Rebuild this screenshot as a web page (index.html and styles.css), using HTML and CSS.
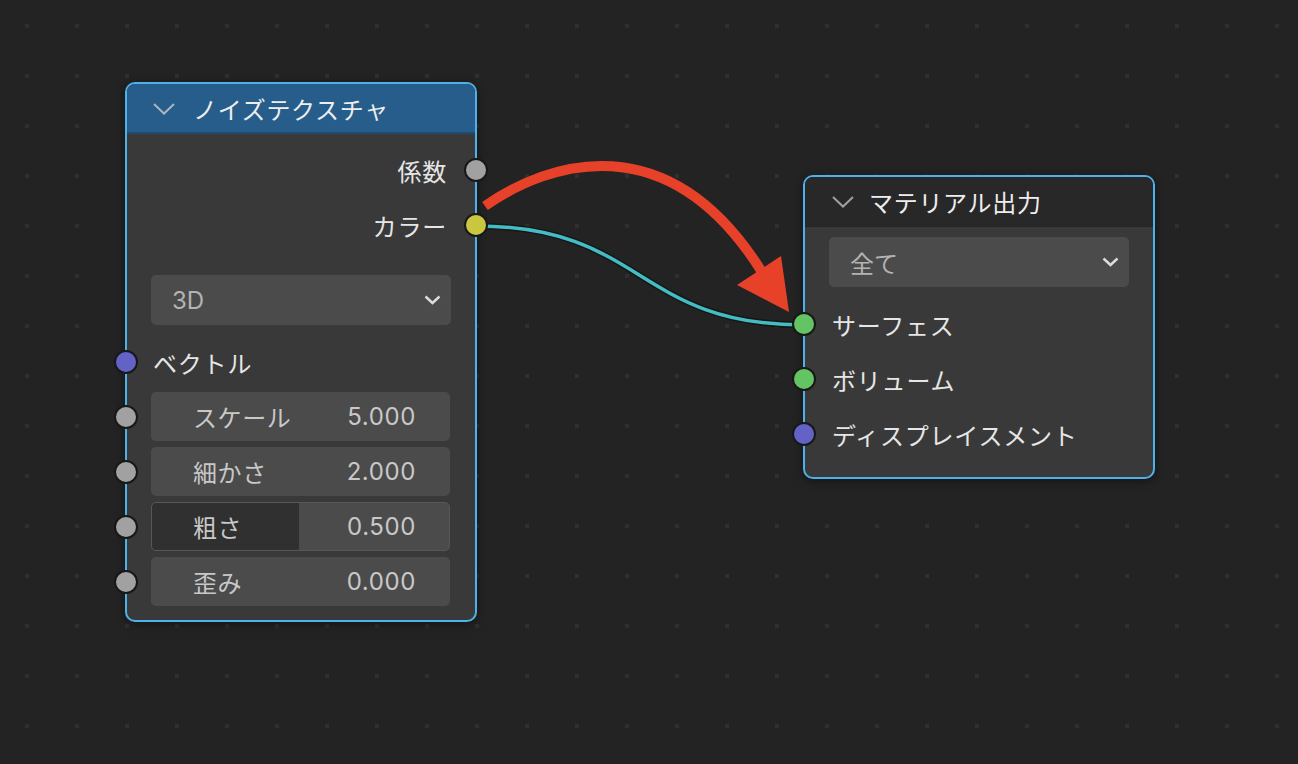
FILE: index.html
```html
<!DOCTYPE html>
<html lang="ja">
<head>
    <meta charset="UTF-8">
    <title>Node Editor</title>
    <link rel="stylesheet" href="styles.css">
</head>
<body>

    <div class="canvas">

        <!-- Links (under the nodes) -->
        <svg class="links" width="1298" height="764" viewBox="0 0 1298 764">
            <path d="M476 226 C 644 226, 636 325, 804 325" fill="none" stroke="#161616" stroke-width="6.5"/>
            <path d="M476 226 C 644 226, 636 325, 804 325" fill="none" stroke="#44bcc4" stroke-width="3.5"/>
        </svg>

        <!-- Noise texture node -->
        <div class="node node-noise">
            <div class="node-header">
                <svg class="chevron" width="22" height="12" viewBox="0 0 22 12"><path d="M1 1 L11 10.5 L21 1" fill="none" stroke="#a9b6c2" stroke-width="2"/></svg>
                <span>ノイズテクスチャ</span>
            </div>
            <div class="node-body">
                <div class="row out first">
                    <span class="label">係数</span>
                    <i class="socket right grey"></i>
                </div>
                <div class="row out second">
                    <span class="label">カラー</span>
                    <i class="socket right yellow"></i>
                </div>

                <div class="dropdown noise-dim">
                    <span>3D</span>
                    <svg width="17" height="10" viewBox="0 0 17 10"><path d="M1.5 1.5 L8.5 8 L15.5 1.5" fill="none" stroke="#dcdcdc" stroke-width="2.4"/></svg>
                </div>

                <div class="row in vector">
                    <i class="socket left purple"></i>
                    <span class="label">ベクトル</span>
                </div>

                <div class="fields">
                    <div class="field-row">
                        <i class="socket left grey"></i>
                        <div class="field"><span>スケール</span><span>5.000</span></div>
                    </div>
                    <div class="field-row">
                        <i class="socket left grey"></i>
                        <div class="field"><span>細かさ</span><span>2.000</span></div>
                    </div>
                    <div class="field-row">
                        <i class="socket left grey"></i>
                        <div class="field factor" style="--fill: 147px"><span>粗さ</span><span>0.500</span></div>
                    </div>
                    <div class="field-row">
                        <i class="socket left grey"></i>
                        <div class="field"><span>歪み</span><span>0.000</span></div>
                    </div>
                </div>
            </div>
        </div>

        <!-- Material output node -->
        <div class="node node-output">
            <div class="node-header">
                <svg class="chevron" width="22" height="12" viewBox="0 0 22 12"><path d="M1 1 L11 10.5 L21 1" fill="none" stroke="#a0a0a0" stroke-width="2"/></svg>
                <span>マテリアル出力</span>
            </div>
            <div class="node-body">
                <div class="dropdown target">
                    <span>全て</span>
                    <svg width="17" height="10" viewBox="0 0 17 10"><path d="M1.5 1.5 L8.5 8 L15.5 1.5" fill="none" stroke="#dcdcdc" stroke-width="2.4"/></svg>
                </div>
                <div class="row in surface">
                    <i class="socket left green"></i>
                    <span class="label">サーフェス</span>
                </div>
                <div class="row in">
                    <i class="socket left green"></i>
                    <span class="label">ボリューム</span>
                </div>
                <div class="row in">
                    <i class="socket left purple"></i>
                    <span class="label">ディスプレイスメント</span>
                </div>
            </div>
        </div>

        <!-- Annotation arrow (over everything) -->
        <svg class="annotation" width="1298" height="764" viewBox="0 0 1298 764">
            <path d="M485 206 C 548 162, 668 122, 762 272" fill="none" stroke="#e8412a" stroke-width="10"/>
            <polygon points="737,285 781,256 789,312" fill="#e8412a"/>
        </svg>
    </div>

</body>
</html>
```

FILE: styles.css
```css
* {
    margin: 0;
    padding: 0;
    box-sizing: border-box;
}

body {
    font-family: "Inter", "Noto Sans CJK JP", sans-serif;
    background-color: #232323;
    color: #e6e6e6;
    overflow: hidden;
}

/* Canvas with dot grid */
.canvas {
    position: relative;
    width: 1298px;
    height: 764px;
    background-color: #232323;
    background-image: conic-gradient(at 4px 4px, transparent 75%, #2f2f2f 0);
    background-size: 50px 50px;
    background-position: 25px 24px;
}

.links,
.annotation {
    position: absolute;
    top: 0;
    left: 0;
}

.annotation {
    z-index: 5;
}

/* Nodes */
.node {
    position: absolute;
    width: 352px;
    background: #393939;
    border: 2px solid #4fb1ea;
    border-radius: 10px;
    box-shadow: 0 2px 10px rgba(0, 0, 0, 0.45);
}

.node-noise {
    left: 125px;
    top: 82px;
    height: 540px;
}

.node-output {
    left: 803px;
    top: 175px;
    height: 304px;
}

.node-header {
    height: 50px;
    display: flex;
    align-items: center;
    padding-left: 26px;
    gap: 18px;
    font-size: 24px;
    color: #eeeeee;
    border-radius: 8px 8px 0 0;
    letter-spacing: 0.7px;
}

.node-noise .node-header {
    background: #275d8b;
    border-bottom: 2px solid #1f4c72;
}

.node-output .node-header {
    background: #282828;
    border-bottom: 1px solid #262626;
    gap: 15px;
    padding-left: 27px;
}

.chevron {
    flex-shrink: 0;
    margin-top: 1px;
}

/* Socket rows */
.row {
    position: relative;
    height: 30px;
    display: flex;
    align-items: center;
    font-size: 24px;
    letter-spacing: 0.8px;
}

.row.out {
    justify-content: flex-end;
    padding-right: 28px;
}

.row.in {
    padding-left: 26px;
    margin-top: 25px;
}

.row.first {
    margin-top: 21px;
}

.row.second {
    margin-top: 25px;
}

.row.vector {
    margin-top: 22px;
}

.node-output .row.in {
    padding-left: 27px;
}

.node-output .row.surface {
    margin-top: 22px;
}

.socket {
    position: absolute;
    top: 50%;
    width: 24px;
    height: 24px;
    margin-top: -12px;
    border-radius: 50%;
    border: 2px solid #181818;
}

.socket.right {
    right: -13px;
}

.socket.left {
    left: -13px;
}

.socket.grey { background: #a1a1a1; }
.socket.yellow { background: #c9c63f; }
.socket.purple { background: #6363c7; }
.socket.green { background: #62c462; }

/* Dropdowns */
.dropdown {
    height: 50px;
    margin: 0 24px;
    background: #4b4b4b;
    border-radius: 5px;
    display: flex;
    align-items: center;
    justify-content: space-between;
    padding: 0 10px 0 21px;
    font-size: 24px;
    color: #b3b3b3;
}

.noise-dim {
    margin-top: 35px;
}

.target {
    margin-top: 10px;
}

/* Value fields */
.fields {
    margin-top: 15px;
    display: flex;
    flex-direction: column;
    gap: 6px;
}

.field-row {
    position: relative;
    padding: 0 25px 0 24px;
}

.field-row .socket {
    left: -13px;
}

.field {
    height: 49px;
    background: #4b4b4b;
    border-radius: 5px;
    display: flex;
    align-items: center;
    justify-content: space-between;
    padding: 0 34px 0 42px;
    font-size: 24px;
    color: #c8c8c8;
    letter-spacing: 0.6px;
}

.field.factor {
    border: 1px solid #575757;
    padding: 0 33px 0 41px;
    background: linear-gradient(to right, #303030 0 var(--fill), #4b4b4b var(--fill));
}
```
